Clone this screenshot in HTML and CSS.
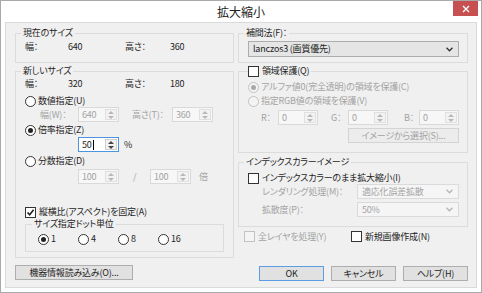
FILE: index.html
```html
<!DOCTYPE html>
<html lang="ja">
<head>
    <meta charset="UTF-8">
    <title>拡大縮小</title>
    <link rel="stylesheet" href="styles.css">
</head>
<body>

    <div class="window">
        <div class="titlebar">
            <span class="title">拡大縮小</span>
            <span class="close">
                <svg width="8" height="8" viewBox="0 0 8 8"><path d="M1 1 L7 7 M7 1 L1 7" stroke="#fff" stroke-width="1.4"/></svg>
            </span>
        </div>

        <div class="client">
            <!-- 左側 -->
            <div class="col">
                <fieldset class="group g-current">
                    <legend>現在のサイズ</legend>
                    <div class="size-row"><span>幅：</span><span>640</span><span>高さ：</span><span>360</span></div>
                </fieldset>

                <fieldset class="group g-new">
                    <legend>新しいサイズ</legend>
                    <div class="size-row"><span>幅：</span><span>320</span><span>高さ：</span><span>180</span></div>

                    <div class="row opt-num"><span class="radio"></span>数値指定(U)</div>
                    <div class="row spin-row dim">
                        <span class="lbl-w">幅(W)：</span>
                        <span class="spin off"><span class="spin-val">640</span><span class="spin-btn"><i class="up"></i><i class="dn"></i></span></span>
                        <span class="lbl-h">高さ(T)：</span>
                        <span class="spin off"><span class="spin-val">360</span><span class="spin-btn"><i class="up"></i><i class="dn"></i></span></span>
                    </div>

                    <div class="row opt-rate"><span class="radio on"></span>倍率指定(Z)</div>
                    <div class="row spin-row rate-row">
                        <span class="spin focus"><span class="spin-val">50<b class="caret"></b></span><span class="spin-btn"><i class="up"></i><i class="dn"></i></span></span>
                        <span class="pct">%</span>
                    </div>

                    <div class="row opt-frac"><span class="radio"></span>分数指定(D)</div>
                    <div class="row spin-row frac-row dim">
                        <span class="spin off"><span class="spin-val">100</span><span class="spin-btn"><i class="up"></i><i class="dn"></i></span></span>
                        <span class="slash">/</span>
                        <span class="spin off"><span class="spin-val">100</span><span class="spin-btn"><i class="up"></i><i class="dn"></i></span></span>
                        <span class="times">倍</span>
                    </div>

                    <div class="row opt-aspect">
                        <span class="check on"><svg width="9" height="9" viewBox="0 0 9 9"><path d="M1.5 4.5 L3.7 6.8 L7.6 1.8" fill="none" stroke="#222" stroke-width="1.6"/></svg></span>縦横比(アスペクト)を固定(A)
                    </div>

                    <fieldset class="group g-dot">
                        <legend>サイズ指定ドット単位</legend>
                        <div class="dot-row">
                            <span class="dot-item"><span class="radio on"></span>1</span>
                            <span class="dot-item"><span class="radio"></span>4</span>
                            <span class="dot-item"><span class="radio"></span>8</span>
                            <span class="dot-item"><span class="radio"></span>16</span>
                        </div>
                    </fieldset>
                </fieldset>

                <button class="btn btn-device">機器情報読み込み(O)...</button>
            </div>

            <!-- 右側 -->
            <div class="col">
                <fieldset class="group g-interp">
                    <legend>補間法(F)：</legend>
                    <div class="combo combo-main">
                        <span>lanczos3 (画質優先)</span>
                        <svg width="7" height="5" viewBox="0 0 7 5"><path d="M0.5 0.8 L3.5 3.8 L6.5 0.8" fill="none" stroke="#333" stroke-width="1.3"/></svg>
                    </div>
                </fieldset>

                <fieldset class="group g-protect">
                    <legend class="check-legend"><span class="check"></span>領域保護(Q)</legend>
                    <div class="row dim p-alpha"><span class="radio on off"></span>アルファ値0(完全透明)の領域を保護(C)</div>
                    <div class="row dim p-rgb"><span class="radio off"></span>指定RGB値の領域を保護(V)</div>
                    <div class="row spin-row rgb-row dim">
                        <span class="lbl-c">R：</span>
                        <span class="spin off"><span class="spin-val">0</span><span class="spin-btn"><i class="up"></i><i class="dn"></i></span></span>
                        <span class="lbl-c lbl-g">G：</span>
                        <span class="spin off"><span class="spin-val">0</span><span class="spin-btn"><i class="up"></i><i class="dn"></i></span></span>
                        <span class="lbl-c lbl-b">B：</span>
                        <span class="spin off"><span class="spin-val">0</span><span class="spin-btn"><i class="up"></i><i class="dn"></i></span></span>
                    </div>
                    <button class="btn btn-pick" disabled>イメージから選択(S)...</button>
                </fieldset>

                <fieldset class="group g-index">
                    <legend>インデックスカラーイメージ</legend>
                    <div class="row idx-check"><span class="check"></span>インデックスカラーのまま拡大縮小(I)</div>
                    <div class="row combo-row dim">
                        <span class="combo-lbl">レンダリング処理(M)：</span>
                        <span class="combo off"><span>適応化誤差拡散</span><svg width="7" height="5" viewBox="0 0 7 5"><path d="M0.5 0.8 L3.5 3.8 L6.5 0.8" fill="none" stroke="#b5b5b5" stroke-width="1.3"/></svg></span>
                    </div>
                    <div class="row combo-row combo-row2 dim">
                        <span class="combo-lbl">拡散度(P)：</span>
                        <span class="combo off"><span>50%</span><svg width="7" height="5" viewBox="0 0 7 5"><path d="M0.5 0.8 L3.5 3.8 L6.5 0.8" fill="none" stroke="#b5b5b5" stroke-width="1.3"/></svg></span>
                    </div>
                </fieldset>

                <div class="row opts-bottom">
                    <span class="opt-layer dim"><span class="check off"></span>全レイヤを処理(Y)</span>
                    <span><span class="check"></span>新規画像作成(N)</span>
                </div>

                <div class="buttons">
                    <button class="btn btn-ok">OK</button>
                    <button class="btn">キャンセル</button>
                    <button class="btn">ヘルプ(H)</button>
                </div>
            </div>
        </div>
    </div>

</body>
</html>
```

FILE: styles.css
```css
* {
    box-sizing: border-box;
}
body {
    margin: 0;
    font-family: "Noto Sans CJK JP", "Noto Sans", sans-serif;
    font-size: 9px;
    letter-spacing: -0.2px;
    line-height: 12px;
    color: #1e1e1e;
    font-feature-settings: "palt";
    background: #fff;
}
.window {
    width: 482px;
    height: 293px;
    border: 1px solid #a9a9a9;
    background: #fff;
    display: flex;
    flex-direction: column;
}
.titlebar {
    height: 21px;
    display: grid;
    grid-template-columns: 1fr auto 1fr;
    align-items: start;
}
.title {
    grid-column: 2;
    font-size: 12px;
    letter-spacing: 0;
    line-height: 21px;
    color: #222;
}
.close {
    grid-column: 3;
    justify-self: end;
    width: 25px;
    height: 15px;
    margin-right: 3px;
    background: #c75050;
    display: flex;
    align-items: center;
    justify-content: center;
}
.client {
    flex: 1;
    margin: 0 4px 4px;
    border: 1px solid #dadada;
    background: #f0f0f0;
    padding: 4px 8px 0 9px;
    display: grid;
    grid-template-columns: 219px 230px;
    column-gap: 4px;
}
.col {
    display: flex;
    flex-direction: column;
}

/* グループボックス */
.group {
    margin: 0;
    min-width: 0;
    border: 1px solid #dcdcdc;
    padding: 2px 9px 9px;
}
.group legend {
    padding: 0 2px;
    margin-left: -4px;
    line-height: 12px;
}
.g-new {
    margin-top: 2px;
    padding-top: 1px;
    padding-bottom: 5px;
}
.row {
    display: flex;
    align-items: center;
    height: 12px;
    white-space: nowrap;
}
.dim {
    color: #a3a3a3;
}
.size-row {
    display: grid;
    grid-template-columns: 43px 57px 45px auto;
    height: 12px;
}
.opt-num { margin-top: 5px; }
.spin-row { height: 15px; }
.lbl-w { padding-left: 15px; width: 53px; }
.lbl-h { margin-left: 13px; width: 40px; }
.opt-rate { margin-top: 2px; }
.rate-row { margin-top: 1px; padding-left: 53px; }
.pct { margin-left: 5px; }
.opt-frac { margin-top: 3px; }
.frac-row { margin-top: 2px; padding-left: 53px; }
.slash { width: 31px; padding-left: 14px; }
.times { margin-left: 8px; }
.opt-aspect { margin-top: 22px; }

.g-dot {
    padding: 3px 9px 6px 12px;
}
.g-dot legend {
    margin-left: -6px;
}
.dot-row {
    display: flex;
    height: 12px;
    align-items: center;
}
.dot-item {
    width: 40px;
    display: flex;
    align-items: center;
}

/* スピンボックス */
.spin {
    display: inline-flex;
    width: 41px;
    height: 15px;
    border: 1px solid #abadb3;
    background: #fff;
    color: #1e1e1e;
}
.spin-val {
    flex: 1;
    padding-left: 3px;
    line-height: 13px;
    display: flex;
    align-items: center;
}
.spin-btn {
    width: 12px;
    margin: 1px;
    border: 1px solid #cfcfcf;
    background: #f2f2f2;
    display: flex;
    flex-direction: column;
    align-items: center;
    justify-content: center;
    gap: 2px;
}
.spin-btn i {
    width: 0;
    height: 0;
    border-left: 3px solid transparent;
    border-right: 3px solid transparent;
}
.spin-btn .up { border-bottom: 3px solid #444; }
.spin-btn .dn { border-top: 3px solid #444; }
.spin.off {
    border-color: #d9d9d9;
    background: #f7f7f7;
    color: #a3a3a3;
}
.spin.off .spin-btn { border-color: #e0e0e0; }
.spin.off .up { border-bottom-color: #b8b8b8; }
.spin.off .dn { border-top-color: #b8b8b8; }
.spin.focus {
    border-color: #4a94e0;
}
.caret {
    width: 1px;
    height: 10px;
    margin-left: 1px;
    background: #000;
}

/* ラジオ・チェック */
.radio {
    width: 11px;
    height: 11px;
    border-radius: 50%;
    border: 1px solid #333;
    background: #fff;
    margin-right: 2px;
    display: inline-flex;
    align-items: center;
    justify-content: center;
    flex: none;
}
.radio.on::after {
    content: "";
    width: 5px;
    height: 5px;
    border-radius: 50%;
    background: #222;
}
.radio.off {
    border-color: #c2c2c2;
    background: #f4f4f4;
}
.radio.off.on::after {
    background: #a8a8a8;
}
.check {
    width: 11px;
    height: 11px;
    border: 1px solid #333;
    background: #fff;
    margin-right: 3px;
    display: inline-flex;
    align-items: center;
    justify-content: center;
    flex: none;
    vertical-align: -2px;
}
.check.off {
    border-color: #c2c2c2;
    background: #f4f4f4;
}

/* ボタン */
.btn {
    font: inherit;
    letter-spacing: inherit;
    font-feature-settings: "palt";
    color: #1e1e1e;
    height: 15px;
    padding: 0;
    border: 1px solid #adadad;
    background: #e1e1e1;
    line-height: 13px;
}
.btn:disabled {
    color: #a3a3a3;
    border-color: #d3d3d3;
    background: #ececec;
}
.btn-device {
    margin-top: 7px;
    width: 118px;
}
.btn-ok {
    border-color: #5a9ee6;
}

/* 右側 */
.g-interp {
    padding: 2px 8px 5px 9px;
}
.combo {
    display: flex;
    align-items: center;
    justify-content: space-between;
    height: 16px;
    border: 1px solid #acacac;
    background: #e5e5e5;
    padding: 0 5px 0 4px;
    color: #1e1e1e;
}
.combo.off {
    height: 15px;
    width: 102px;
    border-color: #dadada;
    background: #f5f5f5;
    color: #a3a3a3;
}
.g-protect {
    margin-top: 2px;
    padding: 4px 8px 9px 9px;
}
.group .check-legend {
    margin-left: 0;
    padding: 0 2px 0 0;
    display: flex;
    align-items: center;
}
.p-rgb { margin-top: 2px; }
.rgb-row { margin-top: 3px; padding-left: 13px; }
.rgb-row .spin { width: 40px; }
.lbl-c { width: 17px; }
.lbl-g { margin-left: 13px; }
.lbl-b { margin-left: 16px; width: 15px; }
.btn-pick {
    margin-top: 3px;
    margin-left: auto;
    width: 111px;
    display: block;
}
.g-index {
    margin-top: 3px;
    padding: 4px 8px 9px 9px;
}
.combo-row { height: 15px; padding-left: 14px; }
.combo-lbl { width: 95px; }
.combo-row2 { margin-top: 3px; }
.opts-bottom {
    margin-top: 4px;
    padding-left: 6px;
}
.opt-layer {
    width: 107px;
}
.buttons {
    margin-top: 23px;
    display: flex;
    justify-content: flex-end;
    gap: 7px;
}
.buttons .btn {
    width: 65px;
}
```
